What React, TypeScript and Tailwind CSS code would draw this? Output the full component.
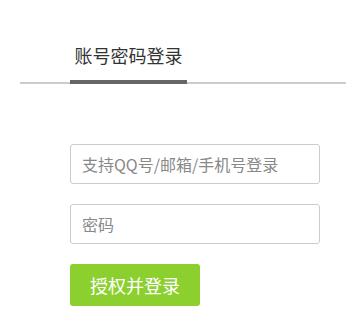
import React from "react";

export default function App() {
  const font = { fontFamily: '"Microsoft YaHei", "Noto Sans CJK SC", "Liberation Sans", sans-serif' };
  return (
    <div className="w-[346px] h-[334px] bg-white overflow-hidden" style={font}>
      <div className="pt-[43px] ml-[20px] border-b-2 border-[#cccccc] flex">
        <div className="ml-[50px] w-[117px] text-center text-[18px] leading-[24px] text-[#333333] pb-[13px] border-b-4 border-[#666666] -mb-[2px]">
          账号密码登录
        </div>
      </div>
      <div className="ml-[70px] mt-[60px] flex flex-col">
        <input
          className="w-[250px] h-[40px] border border-[#cccccc] rounded-[3px] px-[11px] text-[16px] text-[#333] placeholder:text-[#888888] outline-none"
          placeholder="支持QQ号/邮箱/手机号登录"
        />
        <input
          className="mt-[20px] w-[250px] h-[40px] border border-[#cccccc] rounded-[3px] px-[11px] text-[16px] text-[#333] placeholder:text-[#888888] outline-none"
          placeholder="密码"
          type="password"
        />
        <button className="mt-[20px] w-[130px] h-[42px] bg-[#8bd02e] rounded-[3px] text-white text-[18px]">
          授权并登录
        </button>
      </div>
    </div>
  );
}
